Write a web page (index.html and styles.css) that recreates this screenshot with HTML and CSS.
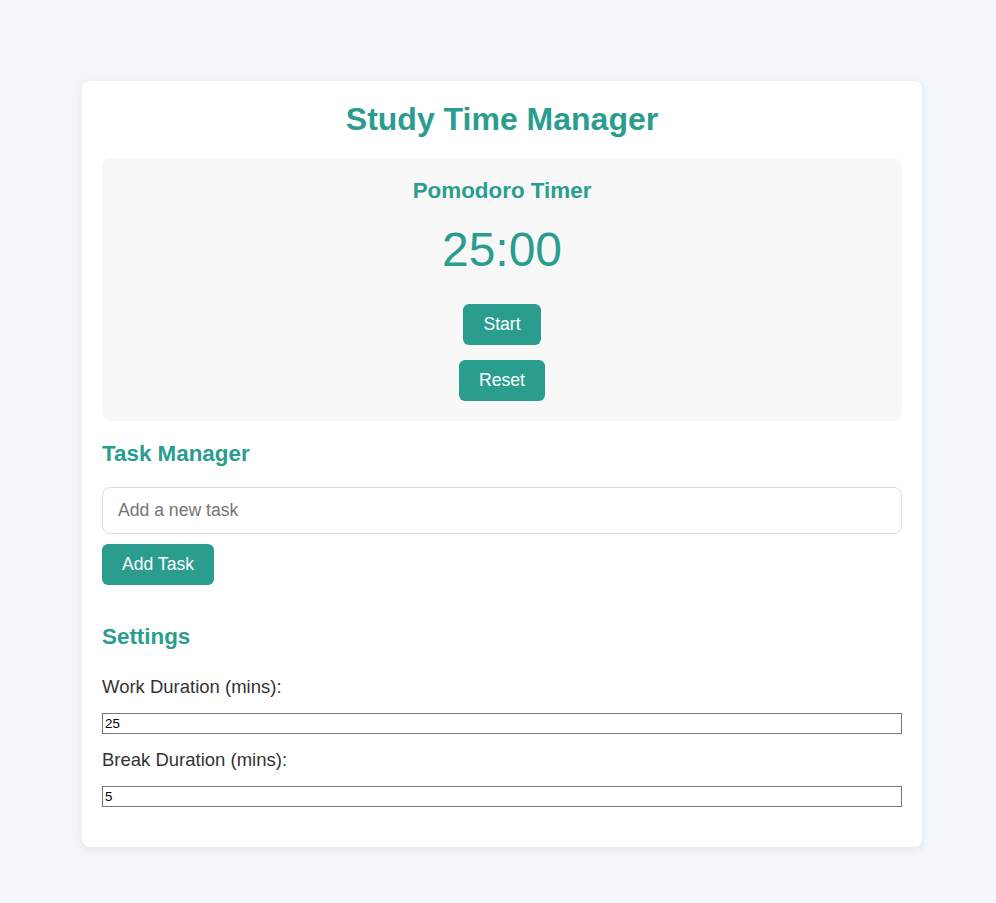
FILE: index.html
```html
<!DOCTYPE html>
<html lang="en">
<head>
<meta charset="utf-8">
<title>Study Time Manager</title>
<link rel="stylesheet" href="styles.css">
</head>
<body>
<div class="card">
  <h1 class="title">Study Time Manager</h1>
  <section class="timer-panel">
    <h2 class="timer-heading">Pomodoro Timer</h2>
    <div class="timer-display">25:00</div>
    <div class="timer-buttons">
      <button class="btn">Start</button>
      <button class="btn">Reset</button>
    </div>
  </section>
  <section class="tasks">
    <h2 class="section-heading">Task Manager</h2>
    <input class="task-input" type="text" placeholder="Add a new task">
    <button class="btn add-btn">Add Task</button>
  </section>
  <section class="settings">
    <h2 class="section-heading settings-heading">Settings</h2>
    <label class="field-label" for="work">Work Duration (mins):</label>
    <input class="num-input" id="work" type="number" value="25">
    <label class="field-label" for="brk">Break Duration (mins):</label>
    <input class="num-input last" id="brk" type="number" value="5">
  </section>
</div>
</body>
</html>
```
FILE: styles.css
```css
html, body {
  margin: 0;
  padding: 0;
}
body {
  background: #f3f6fa;
  font-family: "Liberation Sans", Arial, sans-serif;
  color: #333;
  padding: 81px 0 56px 82px;
}
.card {
  width: 800px;
  padding: 20px;
  background: #fff;
  border-radius: 8px;
  box-shadow: 0 2px 10px rgba(0, 0, 0, 0.08);
}
.title {
  margin: 0 0 20px;
  text-align: center;
  font-size: 32px;
  line-height: 37px;
  font-weight: bold;
  color: #2a9d8f;
}
.timer-panel {
  background: #f8f8f8;
  border-radius: 8px;
  padding: 20px;
  text-align: center;
}
.timer-heading {
  margin: 0;
  font-size: 22.4px;
  line-height: 25px;
  color: #2a9d8f;
}
.timer-display {
  margin: 19px 0 27px;
  font-size: 48px;
  line-height: 55px;
  color: #2a9d8f;
}
.timer-buttons {
  display: flex;
  flex-direction: column;
  align-items: center;
  gap: 15px;
}
.btn {
  background: #2a9d8f;
  color: #fff;
  border: none;
  border-radius: 6px;
  padding: 10px 20px;
  font-family: "Liberation Sans", Arial, sans-serif;
  font-size: 17.6px;
  line-height: 21px;
  cursor: pointer;
}
.section-heading {
  margin: 20px 0 20px;
  font-size: 22.4px;
  line-height: 26px;
  color: #2a9d8f;
}
.task-input {
  display: block;
  box-sizing: border-box;
  width: 100%;
  height: 47px;
  padding: 0 15px;
  border: 1px solid #ddd;
  border-radius: 8px;
  font-family: "Liberation Sans", Arial, sans-serif;
  font-size: 17.6px;
  color: #333;
  margin: 0 0 10px;
}
.task-input::placeholder {
  color: #757575;
}
.add-btn {
  display: block;
}
.settings-heading {
  margin: 39px 0 26px;
}
.field-label {
  display: block;
  font-size: 18.5px;
  line-height: 21px;
  color: #333;
  margin: 0 0 16px;
}
.num-input {
  display: block;
  box-sizing: border-box;
  width: 100%;
  height: 21px;
  margin: 0 0 15px;
  font-family: "Liberation Sans", Arial, sans-serif;
  font-size: 13.33px;
  padding: 1px 2px;
  border: 1px solid #767676;
  color: #000;
}
.num-input.last {
  margin-bottom: 20px;
}
```
